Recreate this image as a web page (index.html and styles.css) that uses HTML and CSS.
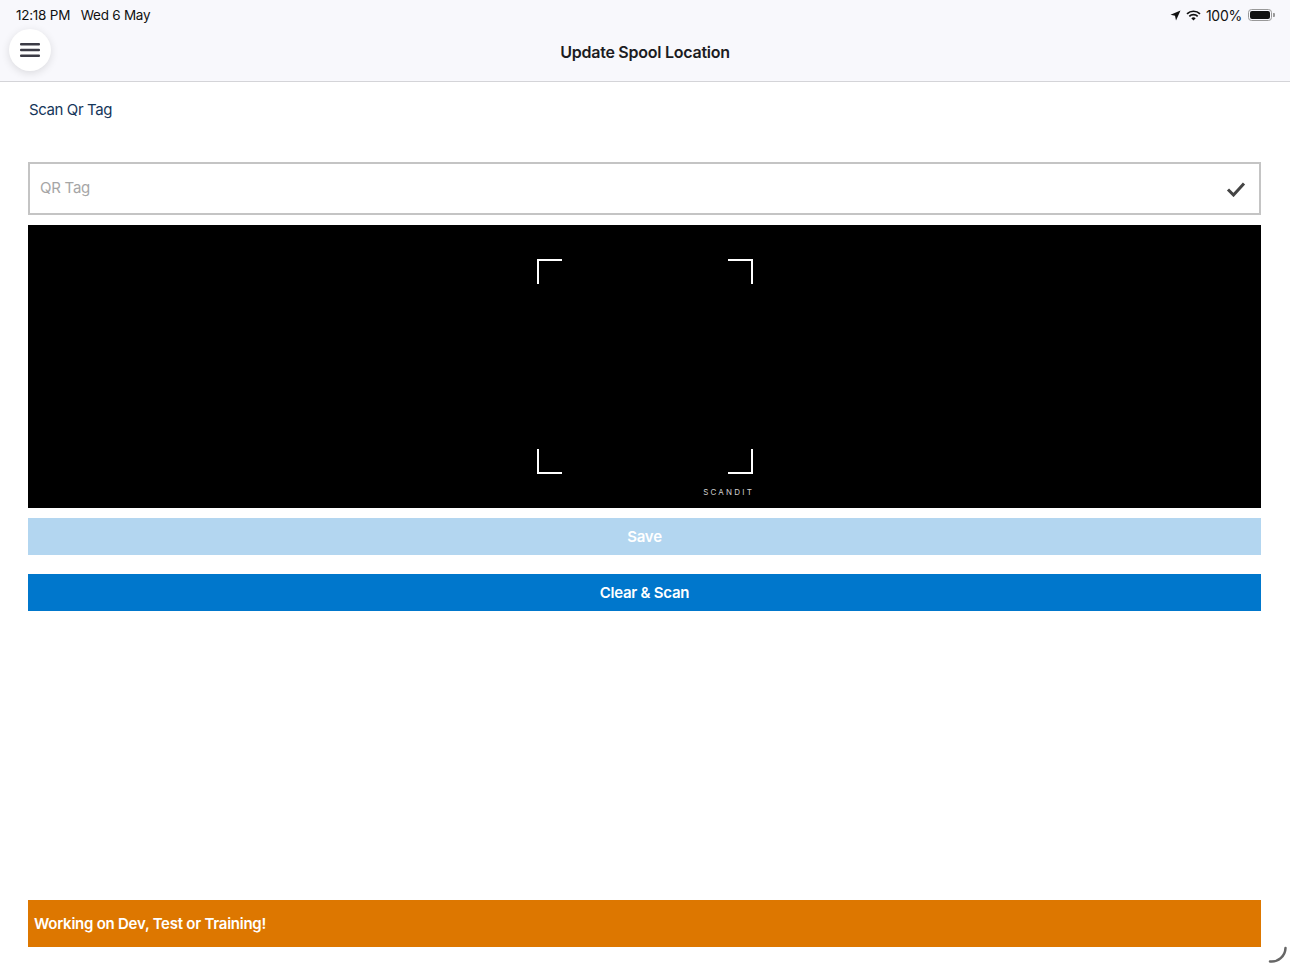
FILE: index.html
```html
<!DOCTYPE html>
<html lang="en">
<head>
    <meta charset="UTF-8">
    <meta name="viewport" content="width=device-width, initial-scale=1.0">
    <title>Update Spool Location</title>
    <link rel="stylesheet" href="styles.css">
</head>
<body>
    <div class="topbar">
        <div class="status">
            <span class="time">12:18 PM&nbsp;&nbsp;&nbsp;Wed 6 May</span>
            <span class="status-right">
                <svg width="11" height="11" viewBox="0 0 11 11"><path d="M10.5 0.5 L0.5 4.8 L5 5.8 L6 10.5 Z" fill="#111"/></svg>
                <svg width="15" height="11" viewBox="0 0 15 11"><path d="M7.5 10.5 L5.3 8.2 A3.2 3.2 0 0 1 9.7 8.2 Z" fill="#111"/><path d="M3.3 6.3 A6 6 0 0 1 11.7 6.3" stroke="#111" stroke-width="1.7" fill="none"/><path d="M1 3.9 A9.3 9.3 0 0 1 14 3.9" stroke="#111" stroke-width="1.7" fill="none"/></svg>
                <span class="pct">100%</span>
                <span class="battery"><span class="battery-fill"></span></span>
                <span class="battery-tip"></span>
            </span>
        </div>
        <div class="navbar">
            <button class="menu-btn">
                <svg width="20" height="16" viewBox="0 0 20 16"><rect x="0" y="1" width="20" height="2.6" rx="1" fill="#3b3b45"/><rect x="0" y="6.7" width="20" height="2.6" rx="1" fill="#3b3b45"/><rect x="0" y="12.4" width="20" height="2.6" rx="1" fill="#3b3b45"/></svg>
            </button>
            <h1 class="title">Update Spool Location</h1>
        </div>
    </div>

    <div class="content">
        <div class="section-label">Scan Qr Tag</div>

        <div class="qr-field">
            <span class="placeholder">QR Tag</span>
            <svg width="20" height="16" viewBox="0 0 20 16"><path d="M2 8.5 L7.5 14 L18 2.5" stroke="#444" stroke-width="3" fill="none"/></svg>
        </div>

        <div class="scanner">
            <div class="frame">
                <span class="corner tl"></span>
                <span class="corner tr"></span>
                <span class="corner bl"></span>
                <span class="corner br"></span>
                <span class="brand">SCANDIT</span>
            </div>
        </div>

        <button class="btn btn-save">Save</button>
        <button class="btn btn-scan">Clear &amp; Scan</button>
    </div>

    <div class="env-banner">Working on Dev, Test or Training!</div>
    <svg class="spinner" width="20" height="20" viewBox="0 0 20 20"><path d="M2 18.5 A14 14 0 0 0 17.5 5" stroke="#666" stroke-width="2.5" stroke-linecap="round" fill="none"/></svg>
</body>
</html>
```

FILE: styles.css
```css
* {
    box-sizing: border-box;
}
body {
    margin: 0;
    width: 1290px;
    height: 967px;
    overflow: hidden;
    font-family: Inter, "Noto Sans", Arial, sans-serif;
    letter-spacing: -0.25px;
    background: white;
    position: relative;
}
.topbar {
    background: #f8f8fc;
    border-bottom: 1px solid #d4d4d8;
    height: 82px;
}
.status {
    display: flex;
    justify-content: space-between;
    align-items: center;
    height: 30px;
    padding: 0 15px 0 16px;
    font-size: 13.5px;
    color: #111;
}
.status-right {
    display: flex;
    align-items: center;
    gap: 5px;
}
.pct {
    font-size: 14px;
}
.battery {
    width: 24px;
    height: 12px;
    border: 1px solid #999;
    border-radius: 3.5px;
    padding: 1px;
    display: flex;
    margin-left: 1px;
}
.battery-fill {
    flex: 1;
    background: #111;
    border-radius: 2px;
}
.battery-tip {
    width: 2px;
    height: 4px;
    background: #999;
    margin-left: -4px;
    border-radius: 0 1px 1px 0;
}
.navbar {
    display: flex;
    align-items: center;
    justify-content: center;
    height: 42px;
    position: relative;
}
.menu-btn {
    position: absolute;
    left: 9px;
    top: -1px;
    width: 42px;
    height: 42px;
    border-radius: 50%;
    border: none;
    background: white;
    box-shadow: 0 2px 8px rgba(0,0,0,0.12);
    display: flex;
    align-items: center;
    justify-content: center;
    padding: 0;
}
.title {
    margin: 2px 0 0 0;
    font-size: 16px;
    font-weight: 600;
    color: #1c1c22;
}
.content {
    padding: 0 29px 0 28px;
}
.section-label {
    font-size: 15px;
    letter-spacing: -0.4px;
    color: #15365a;
    padding: 18px 0 0 1px;
    height: 80px;
}
.qr-field {
    height: 53px;
    border: 2px solid #c4c4c4;
    display: flex;
    align-items: center;
    justify-content: space-between;
    padding: 0 13px 0 10px;
}
.placeholder {
    font-size: 15px;
    color: #a6a6a6;
    margin-top: -2px;
}
.scanner {
    margin-top: 10px;
    height: 283px;
    background: #000;
    display: flex;
    justify-content: center;
    padding-top: 34px;
}
.frame {
    width: 216px;
    height: 215px;
    position: relative;
    margin-left: 1px;
}
.corner {
    position: absolute;
    width: 25px;
    height: 25px;
    border: 0 solid white;
}
.tl { left: 0; top: 0; border-left-width: 2.5px; border-top-width: 2.5px; }
.tr { right: 0; top: 0; border-right-width: 2.5px; border-top-width: 2.5px; }
.bl { left: 0; bottom: 0; border-left-width: 2.5px; border-bottom-width: 2.5px; }
.br { right: 0; bottom: 0; border-right-width: 2.5px; border-bottom-width: 2.5px; }
.brand {
    position: absolute;
    right: -1px;
    top: 228px;
    font-size: 8px;
    letter-spacing: 2.2px;
    color: #d0d0d0;
}
.btn {
    display: block;
    width: 100%;
    border: none;
    color: white;
    font-family: inherit;
    letter-spacing: -0.25px;
    font-size: 15px;
    font-weight: 600;
    height: 37px;
    padding: 0;
}
.btn-save {
    margin-top: 10px;
    background: #b3d6f0;
}
.btn-scan {
    margin-top: 19px;
    background: #0077cc;
}
.env-banner {
    position: absolute;
    left: 28px;
    top: 900px;
    width: 1233px;
    height: 47px;
    background: #dd7700;
    color: white;
    font-size: 15px;
    font-weight: 600;
    display: flex;
    align-items: center;
    padding-left: 6px;
}
.spinner {
    position: absolute;
    left: 1268px;
    top: 943px;
}
```
